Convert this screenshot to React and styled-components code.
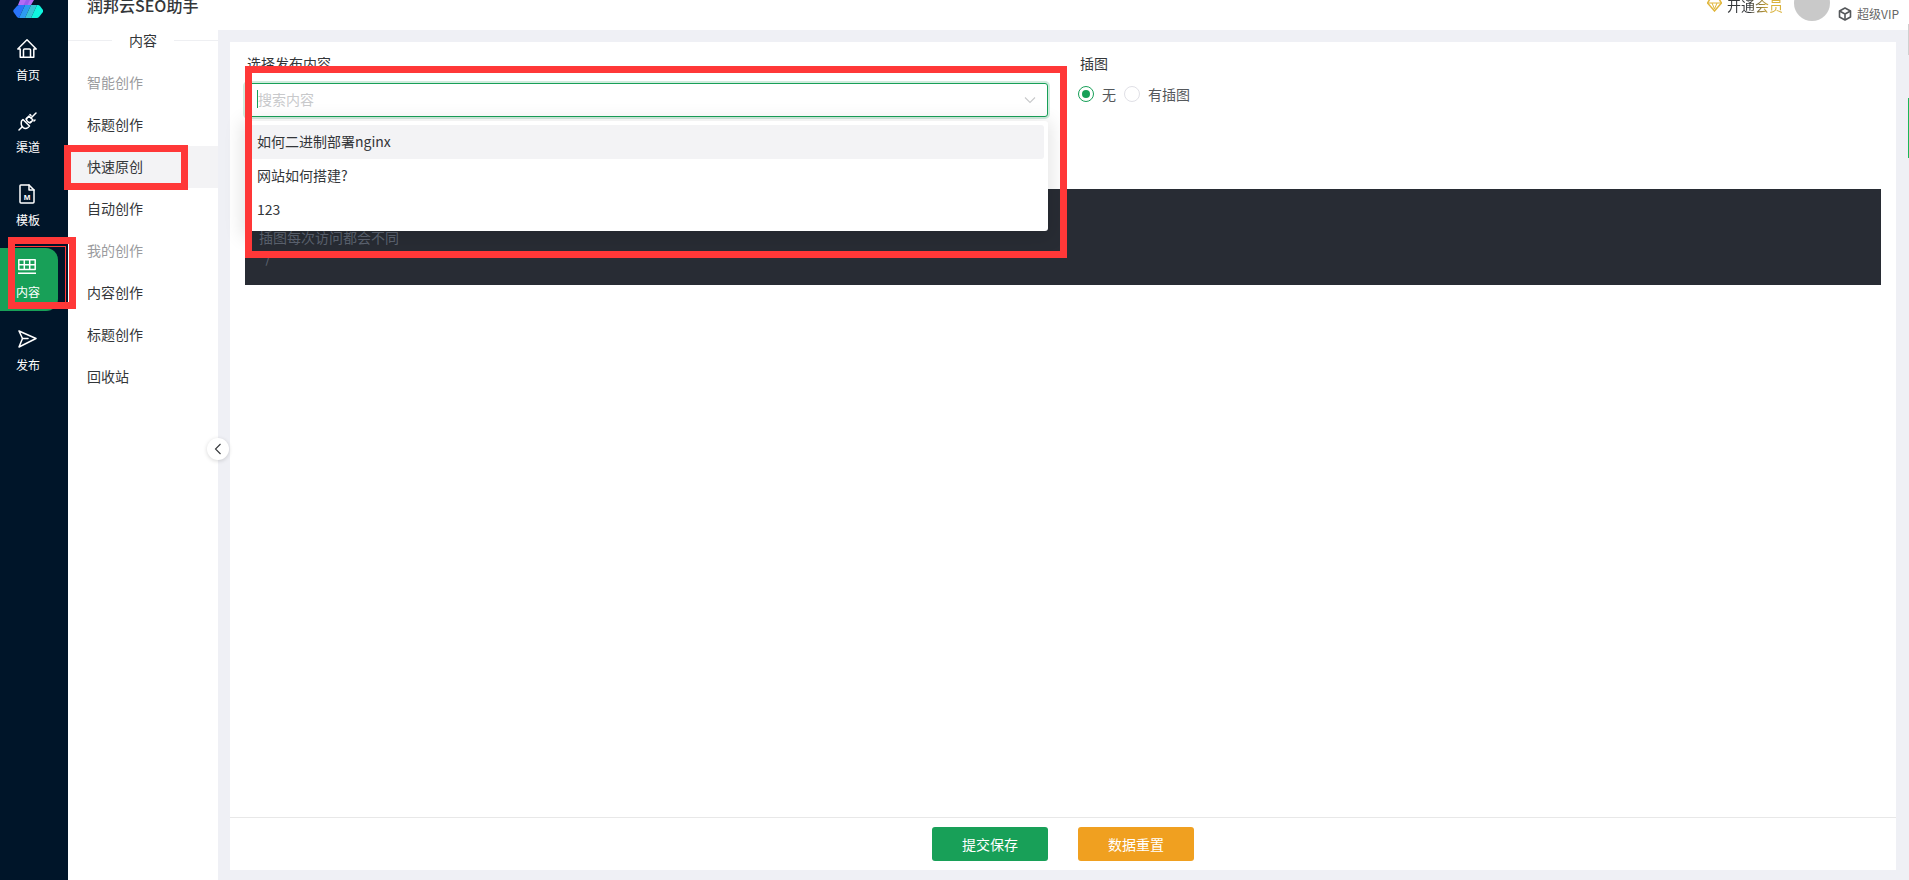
import React from 'react'
import styled, { createGlobalStyle } from 'styled-components'

const GlobalStyle = createGlobalStyle`
  html, body {
    margin: 0;
    height: 880px;
    overflow: hidden;
    background: #fff;
    font-family: "Noto Sans CJK SC", "Noto Sans", sans-serif;
    color: #333639;
  }
`

const Page = styled.div`
  position: relative;
  display: flex;
  width: 1909px;
  height: 880px;
  overflow: hidden;
`

const Side = styled.aside`
  width: 68px;
  flex-shrink: 0;
  background: #001529;
  display: flex;
  flex-direction: column;
`

const LogoBox = styled.div`
  height: 30px;
  display: flex;
  align-items: flex-start;
  padding-left: 13px;
  overflow: hidden;
`

const SideNav = styled.nav`
  display: flex;
  flex-direction: column;
  gap: 9.5px;
`

const SideItem = styled.div`
  width: 58px;
  height: 63px;
  padding-right: 2px;
  box-sizing: border-box;
  border-radius: 0 12px 12px 0;
  background: ${(p) => (p.$active ? '#18a058' : 'transparent')};
  color: #fff;
  display: flex;
  flex-direction: column;
  align-items: center;
  justify-content: center;
  gap: 8px;
  font-size: 12px;
  line-height: 18px;
`

const IconBox = styled.div`
  height: 18px;
  margin-right: 2px;
  display: flex;
  align-items: center;
  justify-content: center;
  svg { display: block; flex-shrink: 0; }
`

const Main = styled.div`
  flex: 1;
  display: flex;
  flex-direction: column;
  min-width: 0;
`

const Header = styled.header`
  height: 30px;
  flex-shrink: 0;
  display: flex;
  align-items: flex-end;
  padding-left: 19px;
  overflow: hidden;
  background: #fff;
`

const AppTitle = styled.div`
  font-size: 16px;
  font-weight: 500;
  line-height: 24px;
  margin-bottom: 13px;
  margin-right: auto;
`

const Vip = styled.div`
  display: flex;
  align-items: center;
  gap: 5px;
  margin-bottom: 13px;
  margin-right: 11px;
  font-size: 14px;
  line-height: 24px;
`

const VipText = styled.span`
  background: linear-gradient(90deg, #333639 40%, #d9b13b 75%);
  -webkit-background-clip: text;
  background-clip: text;
  color: transparent;
`

const Avatar = styled.div`
  width: 36px;
  height: 36px;
  border-radius: 50%;
  background: #c9c9c9;
  margin-bottom: 9px;
  margin-right: 8px;
  flex-shrink: 0;
`

const UserBox = styled.div`
  display: flex;
  flex-direction: column;
  align-items: flex-end;
  margin-bottom: 8px;
  margin-right: 10px;
  font-size: 12px;
  line-height: 16px;
  color: #666;
`

const UserName = styled.div`
  margin-bottom: 5px;
`

const UserLevel = styled.div`
  display: flex;
  align-items: center;
  gap: 5px;
`

const Body = styled.div`
  flex: 1;
  display: flex;
  min-height: 0;
`

const Menu = styled.div`
  width: 150px;
  flex-shrink: 0;
  background: #fff;
`

const MenuTitle = styled.div`
  height: 22px;
  margin-bottom: 10px;
  padding-bottom: 2px;
  box-sizing: border-box;
  display: flex;
  align-items: center;
  gap: 17px;
  font-size: 14px;
  &::before, &::after {
    content: '';
    flex: 1;
    height: 1px;
    background: #eeeff2;
  }
`

const MenuItem = styled.div`
  height: 42px;
  box-sizing: border-box;
  padding: 0 0 2px 19px;
  display: flex;
  align-items: center;
  font-size: 14px;
  color: ${(p) => (p.$group ? '#9a9b9e' : '#333639')};
  background: ${(p) => (p.$active ? '#f3f3f5' : 'transparent')};
`

const Content = styled.main`
  flex: 1;
  min-width: 0;
  background: #eff0f5;
  padding: 12px 13px 10px 12px;
  display: flex;
`

const Panel = styled.div`
  flex: 1;
  min-width: 0;
  background: #fff;
  display: flex;
  flex-direction: column;
`

const PanelBody = styled.div`
  flex: 1;
  padding: 0 15px;
`

const FormRow = styled.div`
  height: 147px;
  display: flex;
  gap: 32px;
`

const SelectField = styled.div`
  width: 803px;
  flex-shrink: 0;
  padding-top: 11px;
`

const RadioField = styled.div`
  padding-top: 11px;
`

const Label = styled.div`
  font-size: 14px;
  line-height: 20px;
  height: 20px;
  margin-bottom: 10px;
  padding-left: ${(p) => (p.$flush ? 0 : 2)}px;
`

const SelectWrap = styled.div`
  position: relative;
`

const SelectBox = styled.div`
  height: 34px;
  box-sizing: border-box;
  border: 1px solid #18a058;
  border-radius: 3px;
  box-shadow: 0 0 0 2px rgba(24, 160, 88, 0.2);
  background: #fff;
  padding: 0 11px;
  display: flex;
  align-items: center;
  justify-content: space-between;
`

const Placeholder = styled.span`
  font-size: 14px;
  color: #c8c9cb;
  border-left: 1px solid #18a058;
  line-height: 18px;
  margin-bottom: 2px;
`

const Dropdown = styled.div`
  position: absolute;
  top: 38px;
  left: 0;
  right: 0;
  padding: 4px;
  background: #fff;
  border-radius: 3px;
  box-shadow: 0 3px 18px 4px rgba(0, 0, 0, 0.1);
  z-index: 3;
`

const Option = styled.div`
  height: 34px;
  box-sizing: border-box;
  padding: 0 0 2px 8px;
  display: flex;
  align-items: center;
  font-size: 14px;
  border-radius: 3px;
  background: ${(p) => (p.$hover ? '#f3f3f5' : 'transparent')};
`

const RadioRow = styled.div`
  display: flex;
  align-items: center;
  height: 16px;
  font-size: 14px;
  padding-top: 3px;
  margin-left: -2px;
  color: #55585b;
`

const Radio = styled.span`
  width: 16px;
  height: 16px;
  box-sizing: border-box;
  border-radius: 50%;
  border: 1px solid ${(p) => (p.$on ? '#18a058' : '#e0e0e6')};
  display: flex;
  align-items: center;
  justify-content: center;
  margin-right: 8px;
  &::after {
    content: '';
    width: 8px;
    height: 8px;
    border-radius: 50%;
    background: ${(p) => (p.$on ? '#18a058' : 'transparent')};
  }
`

const RadioText = styled.span`
  margin-right: 8px;
  margin-bottom: 1px;
`

const CodeBlock = styled.pre`
  margin: 0;
  height: 96px;
  box-sizing: border-box;
  padding: 38px 14px 0;
  background: #282c34;
  color: #5c6370;
  font-family: "Noto Sans CJK SC", "Noto Sans", sans-serif;
  font-size: 14px;
  line-height: 20px;
`

const Footer = styled.div`
  height: 53px;
  box-sizing: border-box;
  border-top: 1px solid #e8e8e8;
  display: flex;
  align-items: center;
  justify-content: center;
  gap: 30px;
`

const Button = styled.button`
  width: 116px;
  height: 34px;
  border: none;
  border-radius: 3px;
  background: ${(p) => (p.$warn ? '#f0a020' : '#18a058')};
  color: #fff;
  font-family: inherit;
  font-size: 14px;
  padding: 0;
`

const Collapse = styled.div`
  position: absolute;
  left: 207px;
  top: 438px;
  width: 22px;
  height: 22px;
  border-radius: 50%;
  background: #fff;
  box-shadow: 0 1px 4px rgba(0, 0, 0, 0.16);
  display: flex;
  align-items: center;
  justify-content: center;
  z-index: 2;
`

// annotations drawn over the screenshot
const Mark = styled.div`
  position: absolute;
  left: ${(p) => p.$x}px;
  top: ${(p) => p.$y}px;
  width: ${(p) => p.$w}px;
  height: ${(p) => p.$h}px;
  box-sizing: border-box;
  border: 7px solid #ff3838;
  z-index: 5;
`

const ThinMark = styled.div`
  position: absolute;
  left: 15px;
  top: 246px;
  width: 51px;
  height: 56px;
  box-sizing: border-box;
  border-top: 1px solid #ff3838;
  border-right: 1px solid #ff3838;
  z-index: 4;
`

const WhiteLine = styled.div`
  position: absolute;
  left: 68px;
  top: 244px;
  width: 1px;
  height: 58px;
  background: #fff;
  z-index: 4;
`

const EdgeBar = styled.div`
  position: absolute;
  left: 1908px;
  top: ${(p) => p.$y}px;
  width: 1px;
  height: ${(p) => p.$h}px;
  background: ${(p) => p.$color};
  z-index: 4;
`

const iconProps = {
  fill: 'none',
  stroke: '#fff',
  strokeWidth: 1.5,
  strokeLinejoin: 'round',
  strokeLinecap: 'round',
}

const LogoIcon = () => (
  <svg width="30" height="18" viewBox="0 0 30 18">
    <defs>
      <clipPath id="logo-body">
        <path d="M6 5H25Q26 5 27 6L30 10Q30.500 11 30 12L26 17Q25 18 24 18H6Q5 18 4 17L.5 12Q0 11 .5 10L4 6Q5 5 6 5z" />
      </clipPath>
    </defs>
    <path d="M7 0H21L18 5H5z" fill="#b56cf5" />
    <path d="M13 0H17L14.500 5H10.500z" fill="#9a5cf0" />
    <g clipPath="url(#logo-body)">
      <path d="M0 5H12L6 18H0z" fill="#2a74fa" />
      <path d="M12 5H18L12 18H6z" fill="#2d9cf0" />
      <path d="M18 5H24L18 18H12z" fill="#38c4d6" />
      <path d="M24 5H30V18H18z" fill="#10f5de" />
    </g>
  </svg>
)

const HomeIcon = () => (
  <svg width="20" height="19" viewBox="0 0 20 19" {...iconProps}>
    <path d="M.8 10L10 .8 19.200 10H16.800V18.200H3.200V10z" />
    <path d="M6.500 18V11Q6.500 10 7.500 10H12.500Q13.500 10 13.500 11V18" />
  </svg>
)

const PlugIcon = () => (
  <svg width="19" height="19" viewBox="0 0 19 19" {...iconProps}>
    <path d="M11 4l4 4-1.500 1.500Q11.500 11.500 9.500 9.500T9.500 5.500z" />
    <path d="M13 6L15.500 3.500M16 9L17 8M12 2.500L13 3.500M15.500 3.500L18 1" />
    <path d="M5 7.500L11.500 14 10 15.500Q7.500 17.500 5 15.500T3.500 9z" />
    <path d="M4.500 14.500L1 18M8 7L9.500 5.500M12 11L13.500 9.500" />
  </svg>
)

const TemplateIcon = () => (
  <svg width="16" height="20" viewBox="0 0 16 20" {...iconProps}>
    <path d="M1.800 1H10L15 6V18Q15 19 14 19H2Q1 19 1 18V1.800Q1 1 1.800 1z" />
    <path d="M10 1V6H15" />
    <text x="8" y="15.500" fontSize="8" fontWeight="700" textAnchor="middle" fill="#fff" stroke="none" fontFamily="Liberation Sans">M</text>
  </svg>
)

const TableIcon = () => (
  <svg width="18" height="15" viewBox="0 0 18 15" {...iconProps} strokeLinecap="butt">
    <rect x=".8" y=".8" width="16.400" height="9.700" />
    <path d="M1 5.700h16M6.300 1v9.500M11.700 1v9.500M0 14.200h18" />
  </svg>
)

const SendIcon = () => (
  <svg width="19" height="18" viewBox="0 0 19 18" {...iconProps}>
    <path d="M1 1L18 8.500 1 17 4.500 8.500z" />
    <path d="M4.500 8.500H10" />
  </svg>
)

const sideItems = [
  { text: '首页', icon: <HomeIcon /> },
  { text: '渠道', icon: <PlugIcon /> },
  { text: '模板', icon: <TemplateIcon /> },
  { text: '内容', icon: <TableIcon />, active: true },
  { text: '发布', icon: <SendIcon /> },
]

const menuItems = [
  { text: '智能创作', group: true },
  { text: '标题创作' },
  { text: '快速原创', active: true },
  { text: '自动创作' },
  { text: '我的创作', group: true },
  { text: '内容创作' },
  { text: '标题创作' },
  { text: '回收站' },
]

const App = () => {
  return (
    <>
      <GlobalStyle />
      <Page>
        <Side>
          <LogoBox>
            <LogoIcon />
          </LogoBox>
          <SideNav>
            {sideItems.map((item) => (
              <SideItem key={item.text} $active={item.active}>
                <IconBox>{item.icon}</IconBox>
                {item.text}
              </SideItem>
            ))}
          </SideNav>
        </Side>
        <Main>
          <Header>
            <AppTitle>润邦云SEO助手</AppTitle>
            <Vip>
              <svg width="15" height="14" viewBox="0 0 15 14" fill="none" stroke="#e0b63c" strokeWidth="1.5">
                <path d="M3 1h9l2.500 4L7.500 13 .5 5z" />
                <path d="M.5 5h14M5 5l2.500 6L10 5" strokeWidth="1" />
              </svg>
              <VipText>开通会员</VipText>
            </Vip>
            <Avatar />
            <UserBox>
              <UserName>润邦用户</UserName>
              <UserLevel>
                <svg width="14" height="14" viewBox="0 0 14 14" fill="none" stroke="#55585b" strokeWidth="1.6" strokeLinejoin="round">
                  <path d="M7 1l5.500 3v6L7 13 1.500 10V4z" />
                  <path d="M1.500 4L7 7l5.500-3M7 7v6" />
                </svg>
                超级VIP
              </UserLevel>
            </UserBox>
          </Header>
          <Body>
            <Menu>
              <MenuTitle>内容</MenuTitle>
              {menuItems.map((item, i) => (
                <MenuItem key={i} $group={item.group} $active={item.active}>
                  {item.text}
                </MenuItem>
              ))}
            </Menu>
            <Content>
              <Panel>
                <PanelBody>
                  <FormRow>
                    <SelectField>
                      <Label>选择发布内容</Label>
                      <SelectWrap>
                        <SelectBox>
                          <Placeholder>搜索内容</Placeholder>
                          <svg width="12" height="8" viewBox="0 0 12 8" fill="none" stroke="#c8c9cb" strokeWidth="1.1">
                            <path d="M1 1.500l5 5 5-5" />
                          </svg>
                        </SelectBox>
                        <Dropdown>
                          <Option $hover>如何二进制部署nginx</Option>
                          <Option>网站如何搭建?</Option>
                          <Option>123</Option>
                        </Dropdown>
                      </SelectWrap>
                    </SelectField>
                    <RadioField>
                      <Label $flush>插图</Label>
                      <RadioRow>
                        <Radio $on />
                        <RadioText>无</RadioText>
                        <Radio />
                        <RadioText>有插图</RadioText>
                      </RadioRow>
                    </RadioField>
                  </FormRow>
                  <CodeBlock>{'插图每次访问都会不同\n*/'}</CodeBlock>
                </PanelBody>
                <Footer>
                  <Button>提交保存</Button>
                  <Button $warn>数据重置</Button>
                </Footer>
              </Panel>
            </Content>
          </Body>
        </Main>
        <Collapse>
          <svg width="8" height="12" viewBox="0 0 8 12" fill="none" stroke="#333639" strokeWidth="1.1">
            <path d="M6.500 1l-5 5 5 5" />
          </svg>
        </Collapse>
        <Mark $x={245} $y={66} $w={822} $h={192} />
        <Mark $x={64} $y={145} $w={124} $h={45} />
        <Mark $x={8} $y={237} $w={68} $h={72} />
        <ThinMark />
        <WhiteLine />
        <EdgeBar $y={24} $h={31} $color="#d0d0d0" />
        <EdgeBar $y={98} $h={60} $color="#18b858" />
      </Page>
    </>
  )
}

export default App
